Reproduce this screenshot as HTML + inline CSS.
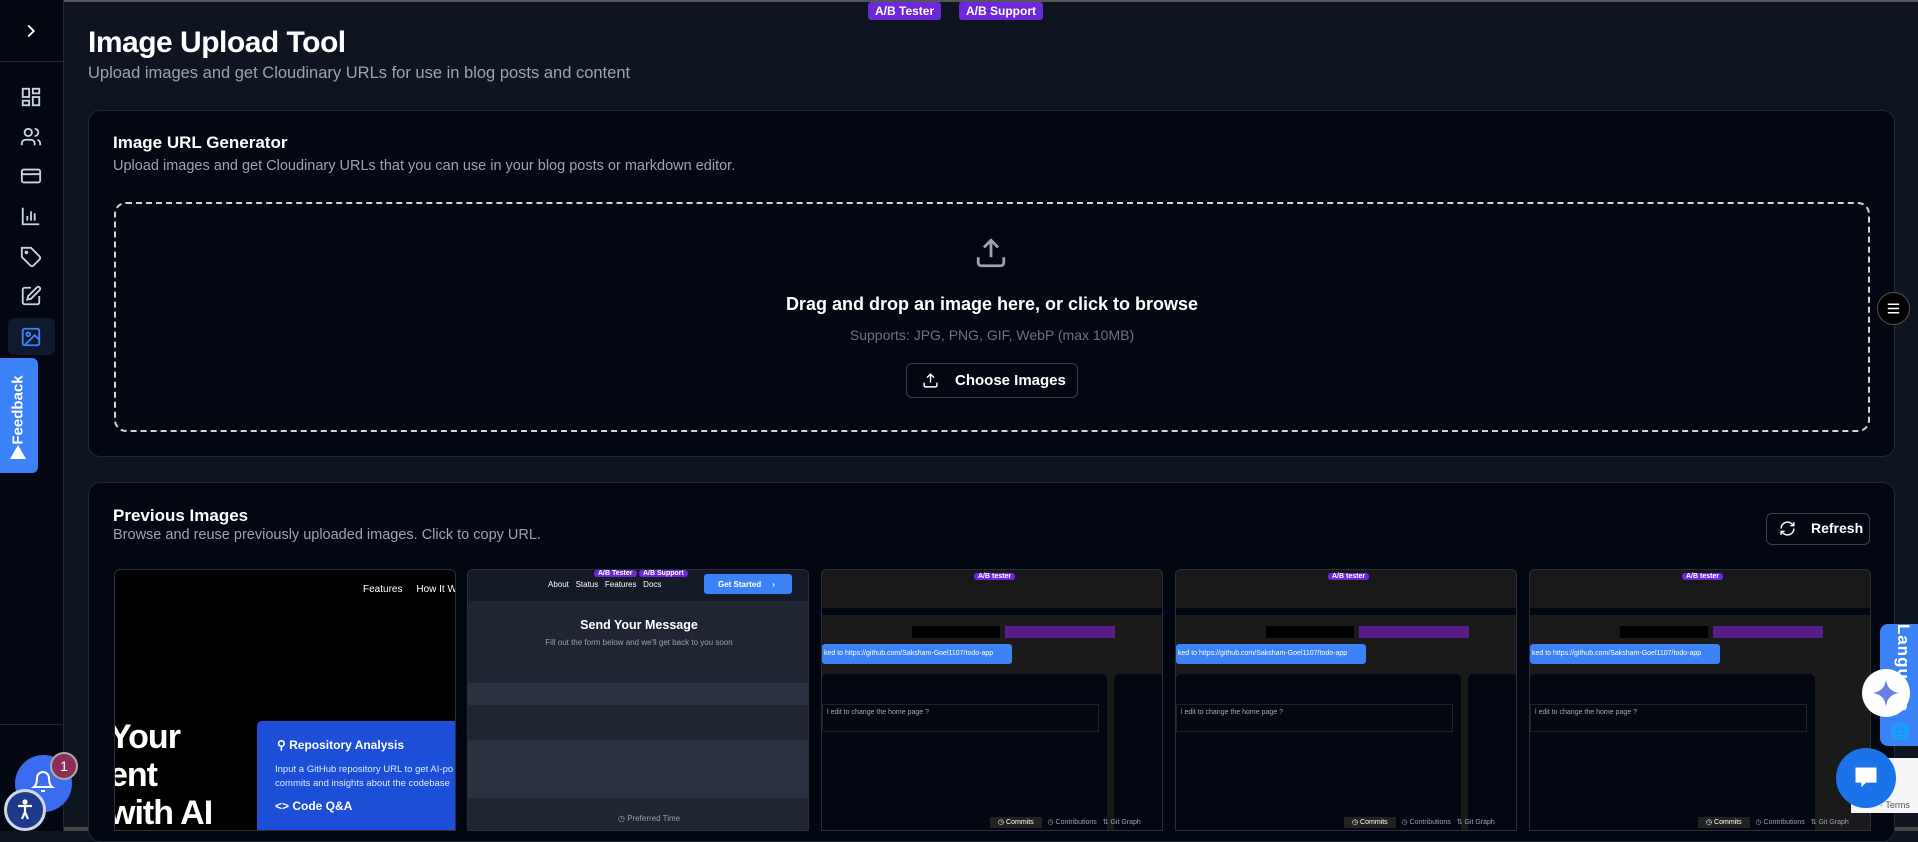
<!DOCTYPE html>
<html><head><meta charset="utf-8"><style>
*{box-sizing:border-box;margin:0;padding:0}
body{width:1918px;height:831px;overflow:hidden;background:#0f1421;font-family:"Liberation Sans",sans-serif;color:#fff;position:relative}
.abs{position:absolute}
.side{left:0;top:0;width:64px;height:831px;background:#030712;border-right:1px solid #1f2937}
.ic{position:absolute;left:20px;width:22px;height:22px}
.card{background:#030712;border:1px solid #1f2937;border-radius:12px}
.badge{background:#6d28d9;color:#fff;font-size:12px;font-weight:bold;border-radius:3px;padding:2px 7px;top:2px}
.thumb{top:569px;height:262px;width:342px;border-radius:6px 6px 0 0;overflow:hidden;border:1px solid #2a2f3a}
.g{color:#9ca3af}
</style></head><body>
<div class="abs" style="left:0;top:0;width:1918px;height:2px;background:#555"></div>
<div class="abs" style="left:0;top:827px;width:1918px;height:4px;background:#444"></div>
<div class="abs side">
<svg class="ic" style="top:20px" viewBox="0 0 24 24" fill="none" stroke="#fff" stroke-width="2"><path d="M9 6l6 6-6 6"/></svg>
<div class="abs" style="left:0;top:61px;width:64px;height:1px;background:#1f2937"></div>
<svg class="ic" style="top:86px" viewBox="0 0 24 24" fill="none" stroke="#cbd5e1" stroke-width="2"><rect x="3" y="3" width="7" height="9"/><rect x="14" y="3" width="7" height="5"/><rect x="14" y="12" width="7" height="9"/><rect x="3" y="16" width="7" height="5"/></svg>
<svg class="ic" style="top:126px" viewBox="0 0 24 24" fill="none" stroke="#cbd5e1" stroke-width="2"><circle cx="9" cy="7" r="4"/><path d="M2 21v-2a4 4 0 014-4h6a4 4 0 014 4v2M16 3a4 4 0 010 8M22 21v-2a4 4 0 00-3-3.9"/></svg>
<svg class="ic" style="top:165px" viewBox="0 0 24 24" fill="none" stroke="#cbd5e1" stroke-width="2"><rect x="2" y="5" width="20" height="14" rx="2"/><path d="M2 10h20"/></svg>
<svg class="ic" style="top:205px" viewBox="0 0 24 24" fill="none" stroke="#cbd5e1" stroke-width="2"><path d="M3 3v18h18M8 17v-5M12 17V7M16 17v-8"/></svg>
<svg class="ic" style="top:246px" viewBox="0 0 24 24" fill="none" stroke="#cbd5e1" stroke-width="2"><path d="M12 2H2v10l9.3 9.3a2.4 2.4 0 003.4 0l6.6-6.6a2.4 2.4 0 000-3.4z"/><circle cx="7" cy="7" r="1"/></svg>
<svg class="ic" style="top:285px" viewBox="0 0 24 24" fill="none" stroke="#cbd5e1" stroke-width="2"><path d="M12 3H5a2 2 0 00-2 2v14a2 2 0 002 2h14a2 2 0 002-2v-7"/><path d="M18.4 2.6a2.1 2.1 0 013 3L12 15l-4 1 1-4z"/></svg>
<div class="abs" style="left:8px;top:318px;width:47px;height:37px;background:#0f1a2e;border-radius:6px"></div>
<svg class="ic" style="top:326px" viewBox="0 0 24 24" fill="none" stroke="#3b82f6" stroke-width="2"><rect x="3" y="3" width="18" height="18" rx="2"/><circle cx="9" cy="9" r="2"/><path d="M21 15l-5-5L5 21"/></svg>
<div class="abs" style="left:0;top:724px;width:64px;height:1px;background:#1f2937"></div>
</div>
<div class="abs" style="left:0;top:358px;width:38px;height:115px;background:#3b82f6;border-radius:0 6px 6px 0"></div>
<div class="abs" style="left:-28px;top:400px;width:95px;height:20px;transform:rotate(-90deg);font-size:15px;font-weight:bold;text-align:center">Feedback</div>
<div class="abs" style="left:10px;top:445px;width:0;height:0;border-left:8px solid transparent;border-right:8px solid transparent;border-bottom:14px solid #fff"></div>
<div class="abs" style="left:15px;top:755px;width:57px;height:57px;border-radius:50%;background:#3b6cf0"></div>
<div class="abs" style="left:50px;top:752px;width:28px;height:28px;border-radius:50%;background:#8b2f5a;border:2px solid #aaa;font-size:14px;text-align:center;line-height:24px">1</div>
<svg class="abs" style="left:31px;top:770px" width="24" height="24" viewBox="0 0 24 24" fill="none" stroke="#fff" stroke-width="2"><path d="M6 8a6 6 0 0112 0c0 7 3 9 3 9H3s3-2 3-9M10 21h4"/></svg>
<div class="abs" style="left:4px;top:789px;width:42px;height:42px;border-radius:50%;background:#1e3a8a;border:3px solid #cfd8ea"></div>
<svg class="abs" style="left:13px;top:798px" width="24" height="24" viewBox="0 0 24 24" fill="none" stroke="#fff" stroke-width="2.2"><circle cx="12" cy="4" r="1.5" fill="#fff"/><path d="M5 8h14M12 8v6l-3 7M12 14l3 7"/></svg>

<div class="abs badge" style="left:868px">A/B Tester</div>
<div class="abs badge" style="left:959px">A/B Support</div>

<div class="abs" style="left:88px;top:26px;font-size:30px;font-weight:bold;letter-spacing:-0.5px">Image Upload Tool</div>
<div class="abs g" style="left:88px;top:64px;font-size:16.5px">Upload images and get Cloudinary URLs for use in blog posts and content</div>

<div class="abs card" style="left:88px;top:110px;width:1807px;height:347px"></div>
<div class="abs" style="left:113px;top:133px;font-size:17px;font-weight:bold">Image URL Generator</div>
<div class="abs g" style="left:113px;top:158px;font-size:14.5px">Upload images and get Cloudinary URLs that you can use in your blog posts or markdown editor.</div>
<div class="abs" style="left:114px;top:202px;width:1756px;height:230px;border:2px dashed #d1d5db;border-radius:12px"></div>
<svg class="abs" style="left:974px;top:236px" width="34" height="34" viewBox="0 0 24 24" fill="none" stroke="#9ca3af" stroke-width="2"><path d="M21 15v4a2 2 0 01-2 2H5a2 2 0 01-2-2v-4M17 8l-5-5-5 5M12 3v12"/></svg>
<div class="abs" style="left:0;width:1984px;top:294px;font-size:18px;font-weight:bold;text-align:center">Drag and drop an image here, or click to browse</div>
<div class="abs" style="left:0;width:1984px;top:327px;font-size:14px;text-align:center;color:#6b7280">Supports: JPG, PNG, GIF, WebP (max 10MB)</div>
<div class="abs" style="left:906px;top:363px;width:172px;height:35px;border:1px solid #374151;border-radius:6px;background:#030712"></div>
<svg class="abs" style="left:922px;top:372px" width="17" height="17" viewBox="0 0 24 24" fill="none" stroke="#fff" stroke-width="2"><path d="M21 15v4a2 2 0 01-2 2H5a2 2 0 01-2-2v-4M17 8l-5-5-5 5M12 3v12"/></svg>
<div class="abs" style="left:955px;top:372px;font-size:15px;font-weight:bold">Choose Images</div>

<div class="abs card" style="left:88px;top:482px;width:1807px;height:360px"></div>
<div class="abs" style="left:113px;top:506px;font-size:17px;font-weight:bold">Previous Images</div>
<div class="abs g" style="left:113px;top:527px;font-size:14.5px">Browse and reuse previously uploaded images. Click to copy URL.</div>
<div class="abs" style="left:1766px;top:513px;width:104px;height:32px;border:1px solid #374151;border-radius:6px"></div>
<svg class="abs" style="left:1779px;top:520px" width="17" height="17" viewBox="0 0 24 24" fill="none" stroke="#fff" stroke-width="2"><path d="M3 12a9 9 0 0115-6.7L21 8M21 3v5h-5M21 12a9 9 0 01-15 6.7L3 16M3 21v-5h5"/></svg>
<div class="abs" style="left:1811px;top:520px;font-size:14px;font-weight:bold">Refresh</div>

<!-- thumb 1 -->
<div class="abs thumb" style="left:114px;background:#000">
<div class="abs" style="left:248px;top:14px;font-size:10px;white-space:nowrap">Features&nbsp;&nbsp;&nbsp;&nbsp;&nbsp;How It Work</div>
<div class="abs" style="left:-6px;top:148px;font-size:34px;font-weight:bold;line-height:38px;letter-spacing:-1px">Your<br>ent<br>with AI</div>
<div class="abs" style="left:142px;top:151px;width:200px;height:120px;background:#1d4ed8;border-radius:5px 0 0 0"></div>
<div class="abs" style="left:162px;top:168px;font-size:12px;font-weight:bold;white-space:nowrap">⚲ Repository Analysis</div>
<div class="abs" style="left:160px;top:193px;font-size:9.5px;line-height:14px;white-space:nowrap;color:#dbeafe">Input a GitHub repository URL to get AI-po<br>commits and insights about the codebase</div>
<div class="abs" style="left:160px;top:229px;font-size:12px;font-weight:bold">&lt;&gt; Code Q&amp;A</div>
</div>
<!-- thumb 2 -->
<div class="abs thumb" style="left:467px;background:#1f2533">
<div class="abs" style="left:0;top:0;width:342px;height:31px;background:#141a26"></div>
<div class="abs badge" style="left:126px;top:0;font-size:7px;padding:0 4px">A/B Tester</div>
<div class="abs badge" style="left:171px;top:0;font-size:7px;padding:0 4px">A/B Support</div>
<div class="abs" style="left:80px;top:10px;font-size:8px;white-space:nowrap">About&nbsp;&nbsp; Status&nbsp;&nbsp; Features&nbsp;&nbsp; Docs</div>
<div class="abs" style="left:236px;top:4px;width:88px;height:20px;background:#3b82f6;border-radius:3px;font-size:8px;font-weight:bold;padding:6px 14px">Get Started&nbsp;&nbsp;&nbsp;&nbsp; ›</div>
<div class="abs" style="left:0;top:48px;width:342px;text-align:center;font-size:12.5px;font-weight:bold">Send Your Message</div>
<div class="abs g" style="left:0;top:68px;width:342px;text-align:center;font-size:8px">Fill out the form below and we'll get back to you soon</div>
<div class="abs" style="left:0;top:113px;width:342px;height:22px;background:#2a3140"></div>
<div class="abs" style="left:0;top:170px;width:342px;height:58px;background:#2a3140"></div>
<div class="abs g" style="left:150px;top:244px;font-size:8px">◷ Preferred Time</div>
</div>
<!-- thumbs 3-5 -->
<div class="abs thumb" style="left:821px;background:#1a1a1a">
<div class="abs" style="left:0;top:0;width:342px;height:38px;background:#191919"></div>
<div class="abs" style="left:0;top:38px;width:342px;height:7px;background:#030712"></div>
<div class="abs badge" style="left:152px;top:3px;font-size:7px;padding:0 4px">A/B tester</div>
<div class="abs" style="left:90px;top:56px;width:88px;height:12px;background:#000"></div>
<div class="abs" style="left:183px;top:56px;width:110px;height:12px;background:#581c87"></div>
<div class="abs" style="left:0;top:74px;width:190px;height:20px;background:#3b82f6;border-radius:3px;font-size:7px;padding:6px 2px;white-space:nowrap">ked to https://github.com/Saksham-Goel1107/todo-app</div>
<div class="abs" style="left:0;top:104px;width:285px;height:195px;background:#030712;border-radius:5px"></div>
<div class="abs" style="left:0;top:134px;width:277px;height:28px;border:1px solid #222;font-size:7px;color:#aaa;padding:4px">l edit to change the home page ?</div>
<div class="abs" style="left:292px;top:104px;width:50px;height:195px;background:#030712;border-radius:5px"></div>
<div class="abs g" style="left:168px;top:248px;font-size:7px;white-space:nowrap"><span style="background:#222;color:#fff;padding:2px 8px">◷ Commits</span>&nbsp;&nbsp; ◷ Contributions&nbsp;&nbsp; ⇅ Git Graph</div>
</div>
<div class="abs thumb" style="left:1175px;background:#1a1a1a">
<div class="abs" style="left:0;top:0;width:342px;height:38px;background:#191919"></div>
<div class="abs" style="left:0;top:38px;width:342px;height:7px;background:#030712"></div>
<div class="abs badge" style="left:152px;top:3px;font-size:7px;padding:0 4px">A/B tester</div>
<div class="abs" style="left:90px;top:56px;width:88px;height:12px;background:#000"></div>
<div class="abs" style="left:183px;top:56px;width:110px;height:12px;background:#581c87"></div>
<div class="abs" style="left:0;top:74px;width:190px;height:20px;background:#3b82f6;border-radius:3px;font-size:7px;padding:6px 2px;white-space:nowrap">ked to https://github.com/Saksham-Goel1107/todo-app</div>
<div class="abs" style="left:0;top:104px;width:285px;height:195px;background:#030712;border-radius:5px"></div>
<div class="abs" style="left:0;top:134px;width:277px;height:28px;border:1px solid #222;font-size:7px;color:#aaa;padding:4px">l edit to change the home page ?</div>
<div class="abs" style="left:292px;top:104px;width:50px;height:195px;background:#030712;border-radius:5px"></div>
<div class="abs g" style="left:168px;top:248px;font-size:7px;white-space:nowrap"><span style="background:#222;color:#fff;padding:2px 8px">◷ Commits</span>&nbsp;&nbsp; ◷ Contributions&nbsp;&nbsp; ⇅ Git Graph</div>
</div>
<div class="abs thumb" style="left:1529px;background:#1a1a1a">
<div class="abs" style="left:0;top:0;width:342px;height:38px;background:#191919"></div>
<div class="abs" style="left:0;top:38px;width:342px;height:7px;background:#030712"></div>
<div class="abs badge" style="left:152px;top:3px;font-size:7px;padding:0 4px">A/B tester</div>
<div class="abs" style="left:90px;top:56px;width:88px;height:12px;background:#000"></div>
<div class="abs" style="left:183px;top:56px;width:110px;height:12px;background:#581c87"></div>
<div class="abs" style="left:0;top:74px;width:190px;height:20px;background:#3b82f6;border-radius:3px;font-size:7px;padding:6px 2px;white-space:nowrap">ked to https://github.com/Saksham-Goel1107/todo-app</div>
<div class="abs" style="left:0;top:104px;width:285px;height:195px;background:#030712;border-radius:5px"></div>
<div class="abs" style="left:0;top:134px;width:277px;height:28px;border:1px solid #222;font-size:7px;color:#aaa;padding:4px">l edit to change the home page ?</div>
<div class="abs g" style="left:168px;top:248px;font-size:7px;white-space:nowrap"><span style="background:#222;color:#fff;padding:2px 8px">◷ Commits</span>&nbsp;&nbsp; ◷ Contributions&nbsp;&nbsp; ⇅ Git Graph</div>
</div>

<!-- right floating -->
<div class="abs" style="left:1877px;top:292px;width:33px;height:33px;border-radius:50%;background:#000;border:1px solid #555"></div>
<svg class="abs" style="left:1885px;top:300px" width="17" height="17" viewBox="0 0 24 24" fill="none" stroke="#fff" stroke-width="2.2"><path d="M4 6h16M4 12h16M4 18h16"/></svg>
<div class="abs" style="left:1880px;top:624px;width:40px;height:122px;background:#3b82f6;border-radius:8px 0 0 8px"></div>
<div class="abs" style="left:1853px;top:656px;width:96px;height:24px;transform:rotate(90deg);font-size:17px;font-weight:bold;text-align:center;letter-spacing:1px">Language</div>
<div class="abs" style="left:1890px;top:722px;font-size:16px">🌐</div>
<div class="abs" style="left:1862px;top:669px;width:48px;height:48px;border-radius:50%;background:#fff"></div>
<svg class="abs" style="left:1870px;top:677px" width="32" height="32" viewBox="0 0 24 24"><path d="M12 2C12.8 8 16 11.2 22 12C16 12.8 12.8 16 12 22C11.2 16 8 12.8 2 12C8 11.2 11.2 8 12 2Z" fill="#6a7fe6"/></svg>
<div class="abs" style="left:1851px;top:758px;width:67px;height:55px;background:#f5f5f5"></div>
<div class="abs" style="left:1880px;top:800px;font-size:9px;color:#555">· Terms</div>
<div class="abs" style="left:1836px;top:748px;width:60px;height:60px;border-radius:50%;background:#1a73e8"></div>
<svg class="abs" style="left:1851px;top:764px" width="30" height="28" viewBox="0 0 24 24"><path d="M3 3h18v13H12l-4 4v-4H3z" fill="#fff"/></svg>
</body></html>
